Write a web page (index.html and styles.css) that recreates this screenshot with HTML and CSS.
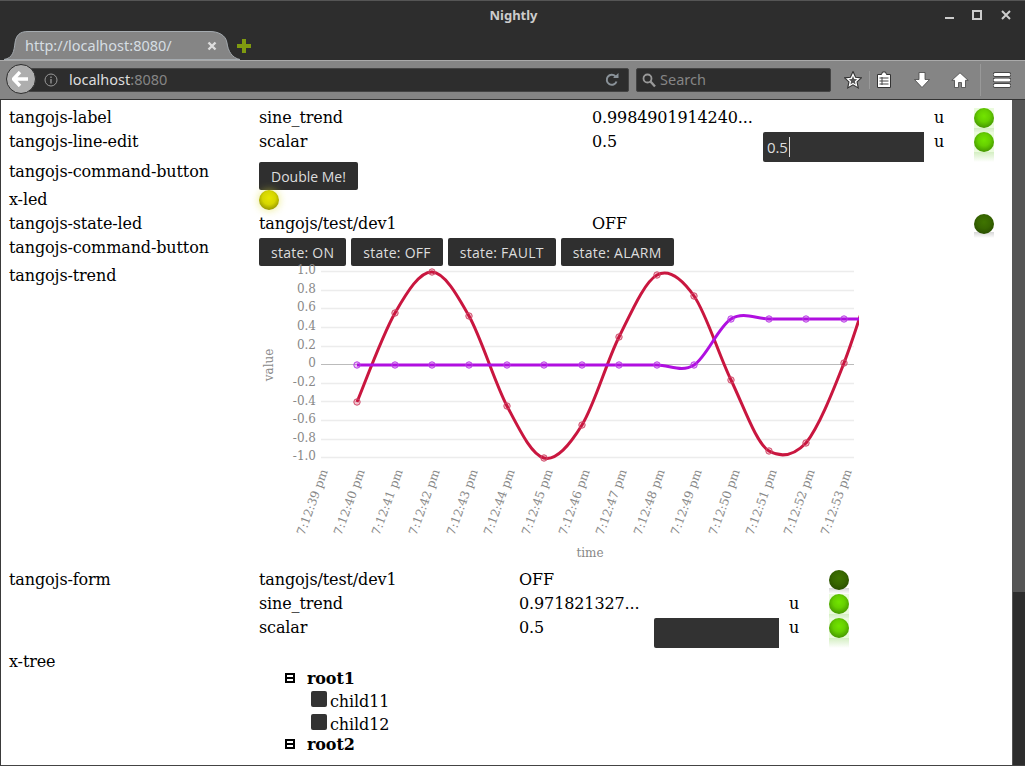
FILE: index.html
```html
<!DOCTYPE html>
<html lang="en">
<head>
    <meta charset="UTF-8">
    <title>Nightly</title>
    <link rel="stylesheet" href="styles.css">
</head>
<body>
    <!-- Window title -->
    <div class="titlebar">
        <span class="title">Nightly</span>
        <div class="win-controls">
            <svg width="12" height="12" viewBox="0 0 12 12"><rect x="1" y="8" width="9" height="2" fill="#ccc"/></svg>
            <svg width="12" height="12" viewBox="0 0 12 12"><path d="M2 2h8v8H2z" fill="none" stroke="#ccc" stroke-width="2"/></svg>
            <svg class="win-close" width="12" height="12" viewBox="0 0 12 12"><path d="M2 2l8 8M10 2l-8 8" stroke="#ccc" stroke-width="2"/></svg>
        </div>
    </div>

    <!-- Tabs -->
    <div class="tabstrip">
        <div class="tab">
            <svg class="tab-shape" width="236" height="29" viewBox="0 0 236 29"><path d="M0 28.500C9 27 10 20 11 12C12 4 16 .5 24 .5H206C214 .5 222 4 223 12C224 20 228 27 236 28.500Z" fill="#858585" stroke="#a5abb0"/></svg>
            <span class="tab-label">http://localhost:8080/</span>
            <svg class="tab-close" width="10" height="10" viewBox="0 0 10 10"><path d="M1.500 1.500l7 7M8.500 1.500l-7 7" stroke="#ddd" stroke-width="2.400"/></svg>
        </div>
        <svg class="new-tab" width="14" height="14" viewBox="0 0 14 14"><path d="M5 0h4v5h5v4H9v5H5V9H0V5h5z" fill="#7f9a10"/></svg>
    </div>

    <!-- Toolbar -->
    <div class="toolbar">
        <div class="back">
            <svg width="18" height="16" viewBox="0 0 18 16"><path d="M8 1L1.500 8 8 15M2 8h14" fill="none" stroke="#fff" stroke-width="3.400"/></svg>
        </div>
        <div class="urlbar">
            <svg class="info" width="14" height="14" viewBox="0 0 14 14"><circle cx="7" cy="7" r="6" fill="none" stroke="#999"/><path d="M7 6v4.500M7 3.500v1.500" stroke="#999" stroke-width="1.300"/></svg>
            <span class="host">localhost</span><span class="port">:8080</span>
            <svg class="reload" width="14" height="14" viewBox="0 0 14 14"><path d="M11.500 8.500A5 5 0 1 1 10.500 3.500" fill="none" stroke="#8a9299" stroke-width="2"/><path d="M8 5h5.500V0z" fill="#8a9299"/></svg>
        </div>
        <div class="searchbar">
            <svg width="14" height="15" viewBox="0 0 14 15"><circle cx="5.500" cy="5.500" r="4" fill="none" stroke="#999" stroke-width="1.800"/><path d="M8.500 8.500l4.500 5" stroke="#999" stroke-width="2.400"/></svg>
            <span>Search</span>
        </div>
        <div class="tools">
            <svg class="tool-star" width="18" height="18" viewBox="1 1 16 16"><path d="M9 1.500l2.300 5 5.200.6-3.900 3.600 1.100 5.300L9 13.300 4.300 16l1.100-5.300L1.500 7.100l5.200-.6z" fill="#fff" stroke="#333"/><path d="M9 5.500l1.100 2.600 2.600.3-2 1.800.6 2.700L9 11.500l-2.300 1.400.6-2.700-2-1.800 2.600-.3z" fill="#555"/></svg>
            <i class="tool-sep sep-a"></i>
            <svg class="tool-list" width="16" height="18" viewBox="0 0 16 18"><path d="M1.500 3.500h4l1-2.500h3l1 2.500h4v13h-13z" fill="#fff" stroke="#333" stroke-linejoin="round"/><path d="M3.500 7h9M3.500 10h9M3.500 13h9M6 6v8" stroke="#444"/></svg>
            <svg class="tool-down" width="16" height="16" viewBox="0 0 16 16"><path d="M5 .5h6v7h4.500L8 15.500.5 7.500H5z" fill="#fff" stroke="#444" stroke-width=".8"/></svg>
            <svg class="tool-home" width="18" height="16" viewBox="0 0 18 16"><path d="M9 .8L.8 8.300h2.700V15.500h4V10.500h3v5h4V8.300h2.700z" fill="#fff" stroke="#444" stroke-width=".8"/></svg>
            <i class="tool-sep sep-b"></i>
            <svg class="tool-menu" width="18" height="16" viewBox="0 0 18 16"><path d="M2 2.500h14M2 8h14M2 13.500h14" stroke="#333" stroke-width="4.600" stroke-linecap="round"/><path d="M2 2.500h14M2 8h14M2 13.500h14" stroke="#fff" stroke-width="3" stroke-linecap="round"/></svg>
        </div>
    </div>

    <div class="viewport">
        <div class="page">
            <div class="row h24">
                <div>tangojs-label</div><div>sine_trend</div><div>0.9984901914240...</div><div></div><div>u</div>
                <div class="led led-on"></div>
            </div>
            <div class="row h30">
                <div>tangojs-line-edit</div><div>scalar</div><div>0.5</div>
                <div class="field field-wide"><span class="caret">0.5</span></div>
                <div>u</div>
                <div class="led led-on"></div>
            </div>
            <div class="row h28">
                <div>tangojs-command-button</div>
                <div class="wide"><button class="btn">Double Me!</button></div>
            </div>
            <div class="row h24">
                <div>x-led</div>
                <div class="wide"><div class="led led-yellow"></div></div>
            </div>
            <div class="row h24">
                <div>tangojs-state-led</div><div>tangojs/test/dev1</div><div>OFF</div><div></div><div></div>
                <div class="led led-off"></div>
            </div>
            <div class="row h28">
                <div>tangojs-command-button</div>
                <div class="wide btn-group">
                    <button class="btn">state: ON</button>
                    <button class="btn">state: OFF</button>
                    <button class="btn">state: FAULT</button>
                    <button class="btn">state: ALARM</button>
                </div>
            </div>
            <div class="row h304">
                <div>tangojs-trend</div>
                <div class="wide">
                    <svg class="chart" width="610" height="304" viewBox="259 266 610 304">
                        <g class="grid">
                            <path d="M321 271.500H854M321 290.500H854M321 308.500H854M321 327.500H854M321 346.500H854M321 383.500H854M321 401.500H854M321 420.500H854M321 439.500H854M321 457.500H854"/>
                            <path class="zero" d="M321 364.500H854"/>
                        </g>
                        <g class="y-ticks">
                            <text x="316" y="274">1.0</text>
                            <text x="316" y="293">0.8</text>
                            <text x="316" y="311">0.6</text>
                            <text x="316" y="330">0.4</text>
                            <text x="316" y="349">0.2</text>
                            <text x="316" y="367">0</text>
                            <text x="316" y="386">-0.2</text>
                            <text x="316" y="405">-0.4</text>
                            <text x="316" y="423">-0.6</text>
                            <text x="316" y="442">-0.8</text>
                            <text x="316" y="460">-1.0</text>
                        </g>
                        <g class="x-ticks">
                            <text transform="translate(328 471) rotate(-70)">7:12:39 pm</text>
                            <text transform="translate(365 471) rotate(-70)">7:12:40 pm</text>
                            <text transform="translate(403 471) rotate(-70)">7:12:41 pm</text>
                            <text transform="translate(440 471) rotate(-70)">7:12:42 pm</text>
                            <text transform="translate(478 471) rotate(-70)">7:12:43 pm</text>
                            <text transform="translate(515 471) rotate(-70)">7:12:44 pm</text>
                            <text transform="translate(553 471) rotate(-70)">7:12:45 pm</text>
                            <text transform="translate(590 471) rotate(-70)">7:12:46 pm</text>
                            <text transform="translate(627 471) rotate(-70)">7:12:47 pm</text>
                            <text transform="translate(665 471) rotate(-70)">7:12:48 pm</text>
                            <text transform="translate(702 471) rotate(-70)">7:12:49 pm</text>
                            <text transform="translate(740 471) rotate(-70)">7:12:50 pm</text>
                            <text transform="translate(777 471) rotate(-70)">7:12:51 pm</text>
                            <text transform="translate(815 471) rotate(-70)">7:12:52 pm</text>
                            <text transform="translate(852 471) rotate(-70)">7:12:53 pm</text>
                        </g>
                        <text class="axis-title" transform="translate(273 365) rotate(-90)">value</text>
                        <text class="axis-title" x="590" y="557">time</text>
                        <clipPath id="plot"><rect x="321" y="262" width="538" height="210"/></clipPath>
                        <g clip-path="url(#plot)">
                            <path class="trace red" d="M357 402C363.300 387.200 382.500 334.700 395 313C407.500 291.300 419.700 271.500 432 272C444.300 272.500 456.500 293.700 469 316C481.500 338.300 494.500 382.300 507 406C519.500 429.700 531.500 454.800 544 458C556.500 461.200 569.500 445.200 582 425C594.500 404.800 606.500 362 619 337C631.500 312 644.500 281.800 657 275C669.500 268.200 681.700 278.500 694 296C706.300 313.500 718.500 354.200 731 380C743.500 405.800 756.500 444 769 451C781.500 458 793.500 456 806 443C818.500 427.300 831.500 395 844 363C856.500 331 874.800 268.800 881 250"/>
                            <path class="trace violet" d="M357 365H657C669.500 365 681.700 372.700 694 365C706.300 357.300 718.500 326.700 731 319C743.500 311.300 756.500 319 769 319H881"/>
                        </g>
                        <g class="dots red">
                            <circle cx="357" cy="402" r="3.200"/><circle cx="395" cy="313" r="3.200"/><circle cx="432" cy="272" r="3.200"/>
                            <circle cx="469" cy="316" r="3.200"/><circle cx="507" cy="406" r="3.200"/><circle cx="544" cy="458" r="3.200"/>
                            <circle cx="582" cy="425" r="3.200"/><circle cx="619" cy="337" r="3.200"/><circle cx="657" cy="275" r="3.200"/>
                            <circle cx="694" cy="296" r="3.200"/><circle cx="731" cy="380" r="3.200"/><circle cx="769" cy="451" r="3.200"/>
                            <circle cx="806" cy="443" r="3.200"/><circle cx="844" cy="363" r="3.200"/>
                        </g>
                        <g class="dots violet">
                            <circle cx="357" cy="365" r="3.200"/><circle cx="395" cy="365" r="3.200"/><circle cx="432" cy="365" r="3.200"/>
                            <circle cx="469" cy="365" r="3.200"/><circle cx="507" cy="365" r="3.200"/><circle cx="544" cy="365" r="3.200"/>
                            <circle cx="582" cy="365" r="3.200"/><circle cx="619" cy="365" r="3.200"/><circle cx="657" cy="365" r="3.200"/>
                            <circle cx="694" cy="365" r="3.200"/><circle cx="731" cy="319" r="3.200"/><circle cx="769" cy="319" r="3.200"/>
                            <circle cx="806" cy="319" r="3.200"/><circle cx="844" cy="319" r="3.200"/>
                        </g>
                    </svg>
                </div>
            </div>

            <div class="form-row">
                <div>tangojs-form</div>
                <div class="form-grid">
                    <div class="form-line h24">
                        <div>tangojs/test/dev1</div><div>OFF</div><div></div><div></div>
                        <div class="led led-off"></div>
                    </div>
                    <div class="form-line h24">
                        <div>sine_trend</div><div>0.971821327...</div><div></div><div>u</div>
                        <div class="led led-on"></div>
                    </div>
                    <div class="form-line h30">
                        <div>scalar</div><div>0.5</div>
                        <div class="field field-small"></div>
                        <div>u</div>
                        <div class="led led-on"></div>
                    </div>
                </div>
            </div>

            <div class="tree-row">
                <div>x-tree</div>
                <ul class="tree">
                    <li class="branch">
                        <svg width="10" height="10" viewBox="0 0 10 10"><path d="M1 1h8v8H1zM1 5h8" fill="none" stroke="#000" stroke-width="2"/></svg>
                        <b>root1</b>
                    </li>
                    <li class="leaf"><i></i>child11</li>
                    <li class="leaf"><i></i>child12</li>
                    <li class="branch">
                        <svg width="10" height="10" viewBox="0 0 10 10"><path d="M1 1h8v8H1zM1 5h8" fill="none" stroke="#000" stroke-width="2"/></svg>
                        <b>root2</b>
                    </li>
                </ul>
            </div>
        </div>
        <div class="scrollbar"><div class="thumb"></div></div>
    </div>
</body>
</html>
```

FILE: styles.css
```css
html, body {
    margin: 0;
    padding: 0;
    height: 766px;
    overflow: hidden;
}
body {
    background-color: #2d2d2d;
    font-family: "Noto Sans", sans-serif;
    display: flex;
    flex-direction: column;
}

/* Browser chrome */
.titlebar {
    height: 31px;
    display: flex;
    align-items: center;
    justify-content: center;
    position: relative;
    border-top: 1px solid #555;
    box-sizing: border-box;
}
.title {
    color: #ccc;
    font-size: 13px;
    font-weight: 700;
    margin: -3px 0 0 2px;
}
.win-controls {
    position: absolute;
    right: 13px;
    top: 8px;
    display: flex;
    gap: 15px;
}
.win-close {
    margin-left: 2px;
}
.tabstrip {
    height: 29px;
    display: flex;
    align-items: center;
    box-sizing: border-box;
}
.tab {
    width: 210px;
    height: 29px;
    margin-left: 15px;
    position: relative;
    display: flex;
    align-items: center;
    justify-content: space-between;
    color: #d5dde2;
    font-size: 14.500px;
}
.tab-shape {
    position: absolute;
    left: -11px;
    top: 0;
}
.tab-label {
    position: relative;
    margin: 0 0 2px 10px;
}
.tab-close {
    position: relative;
    margin-right: 8px;
}
.new-tab {
    margin-left: 12px;
    position: relative;
}
.toolbar {
    height: 40px;
    box-sizing: border-box;
    background-color: #858585;
    border-top: 1px solid #aaa;
    border-bottom: 1px solid #333;
    display: flex;
    align-items: center;
    position: relative;
    padding-left: 28px;
}
.back {
    position: absolute;
    left: 6px;
    top: 3px;
    width: 28px;
    height: 28px;
    border-radius: 50%;
    background-color: #aeaeae;
    border: 1px solid #2d2d2d;
    display: flex;
    align-items: center;
    justify-content: center;
    z-index: 1;
}
.urlbar, .searchbar {
    height: 24px;
    box-sizing: border-box;
    background-color: #2d2d2d;
    border: 1px solid #444;
    border-radius: 2px;
    display: flex;
    align-items: center;
    font-size: 14.500px;
}
.urlbar {
    width: 601px;
    padding-left: 15px;
}
.urlbar span, .searchbar span {
    margin-bottom: 2px;
}
.info {
    margin-right: 11px;
}
.host {
    color: #ddd;
}
.port {
    color: #858585;
}
.reload {
    margin-left: auto;
    margin-right: 9px;
}
.searchbar {
    width: 195px;
    margin-left: 7px;
    padding-left: 5px;
    color: #858585;
    gap: 4px;
}
.tools {
    flex: 1;
    display: flex;
    align-items: center;
    height: 100%;
}
.tools svg {
    flex: none;
}
.tool-star {
    margin-left: 13px;
}
.tool-sep {
    width: 1px;
    height: 18px;
    background-color: #999;
}
.sep-a {
    margin-left: 7px;
}
.tool-list {
    margin-left: 6px;
}
.tool-down {
    margin-left: 22px;
}
.tool-home {
    margin-left: 21px;
}
.sep-b {
    height: 32px;
    margin-left: 11px;
}
.tool-menu {
    margin-left: 12px;
}

/* Page */
.viewport {
    flex: 1;
    min-height: 0;
    display: flex;
    background-color: #fff;
    border-left: 1px solid #3a3a3a;
    border-bottom: 1px solid #444;
    overflow: hidden;
}
.page {
    flex: 1;
    padding: 8px 0 0 8px;
    font-family: "DejaVu Serif", serif;
    font-size: 16px;
    line-height: 19px;
    letter-spacing: -.12px;
    color: #000;
}
.scrollbar {
    width: 12px;
    background-color: #2d2d2d;
    border-left: 1px solid #555;
}
.thumb {
    height: 492px;
    background-color: #555;
}
.row {
    display: grid;
    grid-template-columns: 250px 333px 171px 171px 40px 20px;
    align-items: start;
}
.h24 {
    height: 24px;
}
.h28 {
    height: 28px;
}
.h30 {
    height: 30px;
}
.h304 {
    height: 304px;
}
.wide {
    grid-column: 2 / -1;
}
.btn-group {
    display: flex;
    gap: 5px;
}
.btn {
    height: 28px;
    padding: 0 12px;
    border: none;
    border-radius: 2px;
    background-color: #2f2f2f;
    color: #ddd;
    font-family: "Open Sans", sans-serif;
    font-size: 14px;
    cursor: pointer;
}
.btn-group .btn {
    letter-spacing: .25px;
}
.field {
    height: 30px;
    box-sizing: border-box;
    background-color: #323232;
    border-radius: 2px 0 0 2px;
    color: #ddd;
    font-family: "Open Sans", sans-serif;
    font-size: 15px;
    line-height: 30px;
    padding-left: 4px;
}
.field-wide {
    width: 161px;
}
.field-small {
    width: 125px;
}
.caret {
    border-right: 1px solid #ddd;
    padding-right: 1px;
}

/* LEDs */
.led {
    width: 20px;
    height: 20px;
    position: relative;
}
.led::before {
    content: "";
    display: block;
    width: 20px;
    height: 20px;
    border-radius: 50%;
    position: relative;
    z-index: 1;
}
.led-on {
    background-color: #eafbdc;
}
.led-on::before {
    background: radial-gradient(circle 13px at 50% 40%, #72e400 0, #66d000 45%, #3f8c00 100%);
}
.led-on::after {
    content: "";
    position: absolute;
    left: 0;
    top: 20px;
    width: 20px;
    height: 10px;
    background: linear-gradient(rgba(110, 200, 50, .3), rgba(110, 200, 50, 0));
}
.led-off::before {
    background: radial-gradient(circle 13px at 50% 40%, #3f7400 0, #376600 50%, #274a00 100%);
}
.led-off::after {
    content: "";
    position: absolute;
    left: 0;
    top: 18px;
    width: 20px;
    height: 6px;
    background: linear-gradient(rgba(90, 90, 90, .25), rgba(90, 90, 90, 0));
}
.led-yellow::before {
    background: radial-gradient(circle 13px at 50% 40%, #e6e600 0, #d6d600 50%, #8a8a00 100%);
    box-shadow: 0 0 9px rgba(220, 220, 40, .6);
}

/* Form and tree */
.form-row, .tree-row {
    display: grid;
    grid-template-columns: 250px 1fr;
}
.form-line {
    display: grid;
    grid-template-columns: 260px 135px 135px 40px 20px;
    align-items: start;
}
.tree-row {
    margin-top: 4px;
}
.tree {
    list-style: none;
    margin: 16px 0 0;
    padding: 0 0 0 26px;
}
.branch {
    height: 20px;
    display: flex;
    align-items: center;
    gap: 12px;
}
.branch:first-child {
    margin-bottom: 2px;
}
.branch:last-child {
    margin-top: -2px;
}
.leaf {
    height: 23px;
    display: flex;
    align-items: center;
    padding-left: 26px;
    gap: 3px;
}
.leaf i {
    width: 16px;
    height: 16px;
    border-radius: 2px;
    background-color: #333;
    margin-top: -5px;
}

/* Chart */
.chart {
    display: block;
    overflow: visible;
    letter-spacing: 0;
}
.grid path {
    stroke: #ececec;
    stroke-width: 1.500px;
    fill: none;
}
.grid .zero {
    stroke: #bbb;
    stroke-width: 1px;
}
.y-ticks text {
    fill: #888;
    font-size: 12px;
    text-anchor: end;
}
.x-ticks text {
    fill: #888;
    font-size: 12px;
    text-anchor: end;
}
.axis-title {
    fill: #888;
    font-size: 12px;
    text-anchor: middle;
}
.trace {
    fill: none;
    stroke-width: 3px;
}
.trace.red {
    stroke: #c9163f;
}
.trace.violet {
    stroke: #b00fe0;
}
.dots circle {
    stroke-width: 1px;
}
.dots.red circle {
    fill: rgba(201, 22, 63, .25);
    stroke: #d14a6a;
}
.dots.violet circle {
    fill: rgba(176, 15, 224, .25);
    stroke: #b93de6;
}
```
